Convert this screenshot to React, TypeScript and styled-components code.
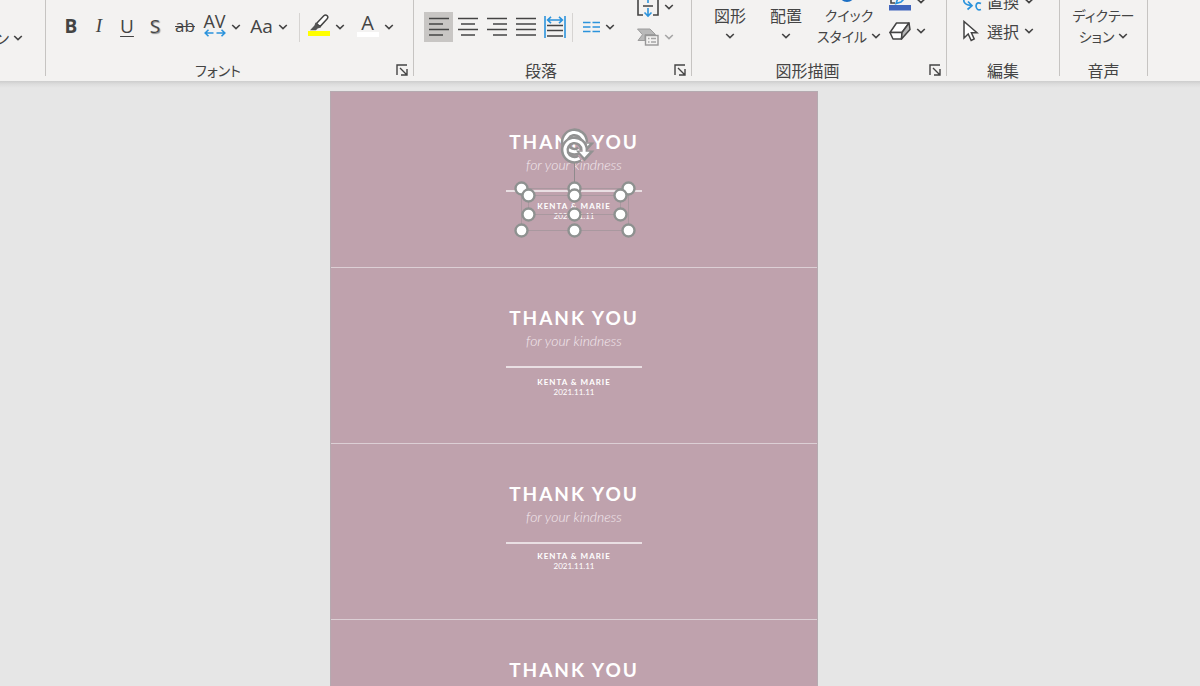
import React from 'react';
import styled, { createGlobalStyle } from 'styled-components';

const INK = '#444444';
const BLUE = '#2b93dc';

const GlobalStyle = createGlobalStyle`
  * { box-sizing: border-box; }
  body {
    margin: 0;
    color: ${INK};
    background: #e6e6e6;
    font-family: "Open Sans", "Noto Sans CJK JP", sans-serif;
  }
  svg { flex: none; }
`;

const Page = styled.div`
  display: flex;
  flex-direction: column;
  height: 100vh;
  overflow: hidden;
`;

const Ribbon = styled.header`
  display: flex;
  align-items: flex-start;
  flex: none;
  overflow: hidden;
  padding-bottom: 1px;
  background: #f3f2f1;
`;

const Divider = styled.div`
  flex: none;
  width: 1px;
  height: 76px;
  background: #c6c4c2;
`;

const Group = styled.section<{ $width: number }>`
  display: flex;
  flex-direction: column;
  flex: none;
  width: ${(p) => p.$width}px;
`;

const GroupBody = styled.div<{ $start?: number }>`
  display: flex;
  height: 60px;
  padding-left: ${(p) => p.$start ?? 0}px;
`;

const GroupFooter = styled.div`
  display: flex;
  align-items: center;
  height: 20px;
`;

const GroupLabel = styled.h2<{ $kana?: boolean }>`
  flex: 1;
  margin: 0;
  text-align: center;
  font-size: ${(p) => (p.$kana ? 14 : 16)}px;
  font-weight: 400;
  line-height: 20px;
  font-family: "Noto Sans CJK JP", sans-serif;
  font-feature-settings: "palt";
`;

const BareButton = styled.button`
  display: flex;
  align-items: center;
  padding: 0;
  border: 0;
  color: inherit;
  background: transparent;
  font: inherit;
  white-space: nowrap;
`;

const Launcher = styled(BareButton)`
  justify-content: center;
  width: 23px;
  height: 20px;
`;

const ToolRow = styled.div`
  display: flex;
  align-items: center;
  height: 30px;
  margin-top: 12px;
`;

const Tool = styled(BareButton)<{ $width: number; $active?: boolean }>`
  justify-content: center;
  gap: 5px;
  width: ${(p) => p.$width}px;
  height: 30px;
  background: ${(p) => (p.$active ? '#c8c6c4' : 'transparent')};
`;

const Glyph = styled.span<{ $kind?: 'bold' | 'italic' | 'underline' | 'shadow' | 'strike' }>`
  padding-bottom: 3px;
  font-size: ${(p) => (p.$kind === 'strike' ? 17 : 19)}px;
  line-height: 24px;
  font-weight: ${(p) => (p.$kind === 'bold' ? 700 : 400)};
  font-style: ${(p) => (p.$kind === 'italic' ? 'italic' : 'normal')};
  font-family: ${(p) => (p.$kind === 'italic' ? '"Liberation Serif", serif' : 'inherit')};
  text-decoration: ${(p) =>
    p.$kind === 'underline' ? 'underline' : p.$kind === 'strike' ? 'line-through' : 'none'};
  text-decoration-thickness: 1px;
  text-underline-offset: 3px;
  text-shadow: ${(p) => (p.$kind === 'shadow' ? '1px 1px 1px #888888' : 'none')};
`;

const GlyphStack = styled.span<{ $line?: number }>`
  display: flex;
  flex-direction: column;
  align-items: center;
  padding-bottom: 4px;
  font-size: ${(p) => (p.$line === 18 ? 20 : 18)}px;
  line-height: ${(p) => p.$line ?? 16}px;
`;

const Swatch = styled.span<{ $color: string }>`
  width: 22px;
  height: 5px;
  background: ${(p) => p.$color};
`;

const RowDivider = styled.div<{ $before: number; $after: number }>`
  width: 1px;
  height: 29px;
  margin: 0 ${(p) => p.$after}px 0 ${(p) => p.$before}px;
  background: #d6d4d2;
`;

const Stack = styled.div<{ $before?: number; $bottom: number }>`
  display: flex;
  flex-direction: column;
  justify-content: flex-end;
  height: 60px;
  margin-left: ${(p) => p.$before ?? 0}px;
  padding-bottom: ${(p) => p.$bottom}px;
`;

const StackItem = styled(BareButton)`
  flex: none;
  gap: 5px;
  height: 30px;
  font-family: "Noto Sans CJK JP", sans-serif;
  font-size: 16px;
`;

const BigButton = styled(BareButton)<{ $width: number }>`
  flex-direction: column;
  justify-content: flex-end;
  width: ${(p) => p.$width}px;
  height: 60px;
  padding-bottom: 14px;
`;

const BigLine = styled.span<{ $kana?: boolean }>`
  display: flex;
  align-items: center;
  justify-content: center;
  gap: 4px;
  flex: none;
  height: 21px;
  font-family: "Noto Sans CJK JP", sans-serif;
  font-size: ${(p) => (p.$kana ? 14 : 16)}px;
  font-feature-settings: "palt";
`;

const CutButton = styled(BareButton)`
  justify-content: flex-end;
  align-items: flex-end;
  width: 45px;
  height: 60px;
  padding: 0 22px 12px 0;
`;

const Workspace = styled.main`
  flex: 1;
  display: flex;
  justify-content: center;
  align-items: flex-start;
  min-height: 0;
  overflow: hidden;
  padding: 10px 52px 0 0;
  background: linear-gradient(#cdcdcd, #dcdcdc 3px, #e6e6e6 7px);
`;

const Slide = styled.div`
  flex: none;
  width: 488px;
  border: 1px solid #b5aab0;
  border-bottom: 0;
  background: #bfa2ad;
`;

const Card = styled.article`
  position: relative;
  display: flex;
  flex-direction: column;
  align-items: center;
  height: 176px;
  padding-top: 38px;
  border-bottom: 1px solid #dccfd5;
  color: #ffffff;
  font-family: Lato, sans-serif;
`;

const Thanks = styled.h3`
  margin: 0;
  font-size: 19px;
  line-height: 24px;
  font-weight: 700;
  letter-spacing: 2px;
`;

const Kindness = styled.p`
  margin: 0;
  font-size: 14px;
  line-height: 22px;
  font-style: italic;
  font-weight: 300;
  color: #f3e9ed;
`;

const Rule = styled.hr`
  width: 136px;
  height: 2px;
  margin: 14px 0 0;
  border: 0;
  background: #e9dfe3;
`;

const Names = styled.p<{ $tight?: boolean }>`
  margin: ${(p) => (p.$tight ? 6 : 8)}px 0 0;
  font-size: 8px;
  line-height: 12px;
  font-weight: 700;
  letter-spacing: 1px;
`;

const WeddingDate = styled.p`
  margin: 0;
  font-size: 8px;
  line-height: 8px;
  font-weight: 400;
`;

const Selection = styled.svg`
  position: absolute;
  top: 33px;
  left: calc(50% - 65px);
`;

const Chevron = ({ color = INK }: { color?: string }) => (
  <svg width="10" height="6" viewBox="0 0 10 6" fill="none" stroke={color} strokeWidth="1.6">
    <path d="M1.2 1 L5 4.6 L8.8 1" />
  </svg>
);

const LauncherIcon = () => (
  <svg width="12" height="12" viewBox="0 0 12 12" fill="none" stroke={INK} strokeWidth="1.4">
    <path d="M1 11V1H11M4 4l6.5 6.5M11 5v6H5" />
  </svg>
);

const LinesIcon = ({ rows }: { rows: [number, number][] }) => (
  <svg width="20" height="20" viewBox="0 0 20 20" stroke={INK} strokeWidth="1.5">
    {rows.map(([a, b], i) => (
      <path key={i} d={`M${a} ${1.5 + i * 5.5}H${b}`} />
    ))}
  </svg>
);

const DistributeIcon = () => (
  <svg width="22" height="22" viewBox="0 0 22 22" fill="none" strokeWidth="1.6">
    <path d="M1 0V22M21 0V22M3.5 4H18.5M7 .8L3.6 4L7 7.2M15 .8L18.4 4L15 7.2" stroke={BLUE} />
    <path d="M3 9.5H19M3 14.5H19M3 20H19" stroke={INK} />
  </svg>
);

const ColumnsIcon = () => (
  <svg width="17" height="12" viewBox="0 0 17 12" stroke={BLUE} strokeWidth="1.5">
    <path d="M0 1.5H7.5M0 6H7.5M0 10.5H7.5M9.5 1.5H17M9.5 6H17M9.5 10.5H17" />
  </svg>
);

const SpacingIcon = () => (
  <svg width="22" height="8" viewBox="0 0 22 8" fill="none" stroke={BLUE} strokeWidth="1.6">
    <path d="M1 4H9.5M4.5 .8L1.2 4L4.5 7.2M12.5 4H21M17.5 .8L20.8 4L17.5 7.2" />
  </svg>
);

const HighlighterIcon = () => (
  <svg width="22" height="17" viewBox="0 0 22 17">
    <path d="M8.5 9.5L15.8 1.8Q17.5 .2 19.2 1.8Q20.6 3.4 19 5L12 12.6Z" fill="#fff" stroke={INK} strokeWidth="1.5" />
    <path d="M7.6 8.6L12.8 13.4L9.6 14.6L8 16.2H2L6.4 11.5Z" fill="#555" />
  </svg>
);

const TextAlignIcon = () => (
  <svg width="22" height="24" viewBox="0 0 22 24" fill="none" strokeWidth="1.6">
    <path d="M6 2H1V20H6M16 2H21V20H16M6 11H16" stroke={INK} />
    <path d="M11 0V8M11 13V21M7.5 17.5L11 21L14.5 17.5" stroke={BLUE} />
  </svg>
);

const SmartArtIcon = () => (
  <svg width="22" height="18" viewBox="0 0 22 18">
    <path d="M.5 1H13L18.5 6.5H8V12.5H1L5.5 6.7Z" fill="#b9b9b9" stroke="#9c9c9c" />
    <rect x="8.5" y="7.5" width="12.5" height="9.5" fill="#f3f2f1" stroke="#979797" strokeWidth="1.4" />
    <path d="M11 10.5H12.5M11 14H12.5M14 10.5H19M14 14H19" stroke="#a5a5a5" strokeWidth="1.4" />
  </svg>
);

const OutlineIcon = () => (
  <svg width="22" height="20" viewBox="0 0 22 20" fill="none">
    <path d="M15 1H2V12H6" stroke={INK} strokeWidth="1.6" />
    <path d="M7 12.5L9 7L16 1L19 4L12 11Z" fill="#f3f2f1" stroke={BLUE} strokeWidth="1.6" />
    <path d="M0 14H22V19.5H0Z" fill="#3f65bd" />
  </svg>
);

const EraserIcon = () => (
  <svg width="22" height="20" viewBox="0 0 22 20" stroke={INK} strokeWidth="1.5" strokeLinejoin="round">
    <path d="M1 11.5L7.5 2H20L13 11.5Z" fill="#fff" />
    <path d="M1 11.5H13L12.5 18H4Z" fill="#fff" />
    <path d="M13 11.5L20 2L21 8.5L12.5 18Z" fill="#b5b5b5" />
  </svg>
);

const ReplaceIcon = () => (
  <svg width="20" height="22" viewBox="0 0 20 22" fill="none" stroke={BLUE} strokeWidth="1.7">
    <path d="M3 6Q-1 14 8.5 15.5M6 11.5L10 15.7L5.5 19.5M19 13.5Q14.5 11.5 14 16Q14.5 21 19 19.5" />
  </svg>
);

const PointerIcon = () => (
  <svg width="20" height="22" viewBox="0 0 20 22">
    <path
      d="M2 1.5V18L6.2 14L9.2 20.5L12.2 19L9.4 12.8H15Z"
      fill="#fff"
      stroke={INK}
      strokeWidth="1.5"
    />
  </svg>
);

const StyleIcon = () => (
  <svg width="16" height="20" viewBox="0 0 16 20">
    <circle cx="6" cy="10" r="8" fill="#1b6fc4" />
  </svg>
);

const handles: [number, number][] = [
  [521, 188], [574, 188], [628, 188],
  [521, 230], [574, 230], [628, 230],
  [528, 195], [574, 195], [620, 195],
  [528, 214], [574, 214], [620, 214],
];

const RotateHandle = ({ y }: { y: number }) => (
  <g transform={`translate(574.5 ${y})`} fill="none">
    <path d="M5 8.2A9.6 9.6 0 1 1 9.6 0" stroke="#929292" strokeWidth="8" />
    <path d="M1.5 .5H20L10 11.5Z" fill="#929292" />
    <path d="M5 8.2A9.6 9.6 0 1 1 9.6 0V2.5" stroke="#fff" strokeWidth="3" />
    <path d="M4.6 1.8H15.2L9.9 7.6Z" fill="#fff" />
  </g>
);

const SelectionHandles = () => (
  <Selection width="130" height="115" viewBox="509 125 130 115" aria-hidden="true">
    <g fill="none" stroke="#a9989f" strokeWidth="1">
      <path d="M521.5 188.5H628.5V230.5H521.5Z" />
      <path d="M528.5 195.5H620.5V214.5H528.5Z" />
      <path d="M574.5 160V188" stroke="#8f8a8c" />
    </g>
    <RotateHandle y={142} />
    <RotateHandle y={150} />
    {handles.map(([x, y], i) => (
      <circle key={i} cx={x + 0.5} cy={y + 0.5} r="6" fill="#fff" stroke="#8e9190" strokeWidth="2.4" />
    ))}
  </Selection>
);

const Footer = ({ label, kana, launcher }: { label: string; kana?: boolean; launcher?: boolean }) => (
  <GroupFooter>
    <GroupLabel $kana={kana}>{label}</GroupLabel>
    {launcher && (
      <Launcher aria-label={`${label}の詳細`}>
        <LauncherIcon />
      </Launcher>
    )}
  </GroupFooter>
);

const ThankYouCard = ({ selected, tight }: { selected?: boolean; tight?: boolean }) => (
  <Card>
    <Thanks>THANK YOU</Thanks>
    <Kindness>for your kindness</Kindness>
    <Rule />
    <Names $tight={tight}>KENTA &amp; MARIE</Names>
    <WeddingDate>2021.11.11</WeddingDate>
    {selected && <SelectionHandles />}
  </Card>
);

export default function App() {
  return (
    <Page>
      <GlobalStyle />
      <Ribbon>
        <Group $width={45}>
          <CutButton aria-label="セクション">
            <BigLine>
              ン
              <Chevron />
            </BigLine>
          </CutButton>
        </Group>
        <Divider />
        <Group $width={367}>
          <GroupBody $start={11}>
            <ToolRow>
              <Tool $width={28} aria-label="太字"><Glyph $kind="bold">B</Glyph></Tool>
              <Tool $width={28} aria-label="斜体"><Glyph $kind="italic">I</Glyph></Tool>
              <Tool $width={28} aria-label="下線"><Glyph $kind="underline">U</Glyph></Tool>
              <Tool $width={28} aria-label="影"><Glyph $kind="shadow">S</Glyph></Tool>
              <Tool $width={32} aria-label="取り消し線"><Glyph $kind="strike">ab</Glyph></Tool>
              <Tool $width={42} aria-label="文字の間隔">
                <GlyphStack>
                  AV
                  <SpacingIcon />
                </GlyphStack>
                <Chevron />
              </Tool>
              <Tool $width={52} aria-label="文字種の変換">
                <Glyph>Aa</Glyph>
                <Chevron />
              </Tool>
              <RowDivider $before={4} $after={3} />
              <Tool $width={46} aria-label="蛍光ペンの色">
                <GlyphStack>
                  <HighlighterIcon />
                  <Swatch $color="#ffff00" />
                </GlyphStack>
                <Chevron />
              </Tool>
              <Tool $width={52} aria-label="フォントの色">
                <GlyphStack $line={18}>
                  A
                  <Swatch $color="#ffffff" />
                </GlyphStack>
                <Chevron />
              </Tool>
            </ToolRow>
          </GroupBody>
          <Footer label="フォント" kana launcher />
        </Group>
        <Divider />
        <Group $width={277}>
          <GroupBody $start={10}>
            <ToolRow>
              <Tool $width={29} $active aria-label="左揃え"><LinesIcon rows={[[0, 20], [0, 14], [0, 20], [0, 14]]} /></Tool>
              <Tool $width={29} aria-label="中央揃え"><LinesIcon rows={[[0, 20], [3, 17], [0, 20], [3, 17]]} /></Tool>
              <Tool $width={29} aria-label="右揃え"><LinesIcon rows={[[0, 20], [6, 20], [0, 20], [6, 20]]} /></Tool>
              <Tool $width={29} aria-label="両端揃え"><LinesIcon rows={[[0, 20], [0, 20], [0, 20], [0, 20]]} /></Tool>
              <Tool $width={29} aria-label="均等割り付け"><DistributeIcon /></Tool>
              <RowDivider $before={3} $after={4} />
              <Tool $width={43} aria-label="段組み">
                <ColumnsIcon />
                <Chevron />
              </Tool>
            </ToolRow>
            <Stack $before={17} $bottom={8}>
              <StackItem aria-label="文字の配置"><TextAlignIcon /><Chevron /></StackItem>
              <StackItem aria-label="SmartArt に変換"><SmartArtIcon /><Chevron color="#a6a6a6" /></StackItem>
            </Stack>
          </GroupBody>
          <Footer label="段落" launcher />
        </Group>
        <Divider />
        <Group $width={254}>
          <GroupBody $start={10}>
            <BigButton $width={56}>
              <BigLine>図形</BigLine>
              <BigLine><Chevron /></BigLine>
            </BigButton>
            <BigButton $width={56}>
              <BigLine>配置</BigLine>
              <BigLine><Chevron /></BigLine>
            </BigButton>
            <BigButton $width={70}>
              <StyleIcon />
              <BigLine $kana>クイック</BigLine>
              <BigLine $kana>スタイル<Chevron /></BigLine>
            </BigButton>
            <Stack $before={5} $bottom={14}>
              <StackItem aria-label="図形の枠線"><OutlineIcon /><Chevron /></StackItem>
              <StackItem aria-label="図形の効果"><EraserIcon /><Chevron /></StackItem>
            </Stack>
          </GroupBody>
          <Footer label="図形描画" launcher />
        </Group>
        <Divider />
        <Group $width={112}>
          <GroupBody $start={15}>
            <Stack $bottom={14}>
              <StackItem><ReplaceIcon />置換<Chevron /></StackItem>
              <StackItem><PointerIcon />選択<Chevron /></StackItem>
            </Stack>
          </GroupBody>
          <Footer label="編集" />
        </Group>
        <Divider />
        <Group $width={87}>
          <GroupBody>
            <BigButton $width={87}>
              <BigLine $kana>ディクテー</BigLine>
              <BigLine $kana>ション<Chevron /></BigLine>
            </BigButton>
          </GroupBody>
          <Footer label="音声" />
        </Group>
        <Divider />
      </Ribbon>
      <Workspace>
        <Slide>
          <ThankYouCard selected />
          <ThankYouCard />
          <ThankYouCard tight />
          <ThankYouCard />
        </Slide>
      </Workspace>
    </Page>
  );
}
